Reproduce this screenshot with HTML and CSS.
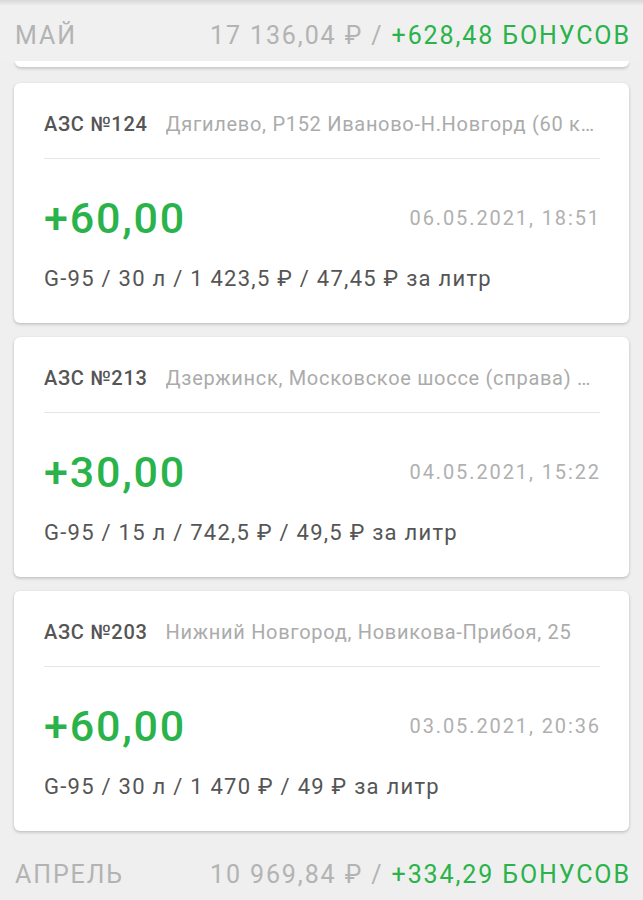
FILE: index.html
```html
<!DOCTYPE html>
<html lang="ru">
<head>
<meta charset="utf-8">
<link rel="stylesheet" href="styles.css">
</head>
<body>
<div class="screen">
  <div class="month">
    <span class="month-name">МАЙ</span>
    <span class="month-sum">17 136,04 ₽ / <span class="bonus">+628,48 БОНУСОВ</span></span>
  </div>
  <div class="card-tail"></div>
  <div class="list">
    <div class="card">
      <div class="card-head">
        <span class="station">АЗС №124</span>
        <span class="address">Дягилево, Р152 Иваново-Н.Новгорд (60 км)</span>
      </div>
      <div class="card-main">
        <span class="amount">+60,00</span>
        <span class="date">06.05.2021, 18:51</span>
      </div>
      <div class="fuel">G-95 / 30 л / 1 423,5 ₽ / 47,45 ₽ за литр</div>
    </div>
    <div class="card">
      <div class="card-head">
        <span class="station">АЗС №213</span>
        <span class="address">Дзержинск, Московское шоссе (справа) км 28</span>
      </div>
      <div class="card-main">
        <span class="amount">+30,00</span>
        <span class="date">04.05.2021, 15:22</span>
      </div>
      <div class="fuel">G-95 / 15 л / 742,5 ₽ / 49,5 ₽ за литр</div>
    </div>
    <div class="card">
      <div class="card-head">
        <span class="station">АЗС №203</span>
        <span class="address">Нижний Новгород, Новикова-Прибоя, 25</span>
      </div>
      <div class="card-main">
        <span class="amount">+60,00</span>
        <span class="date">03.05.2021, 20:36</span>
      </div>
      <div class="fuel">G-95 / 30 л / 1 470 ₽ / 49 ₽ за литр</div>
    </div>
  </div>
  <div class="month month-bottom">
    <span class="month-name">АПРЕЛЬ</span>
    <span class="month-sum">10 969,84 ₽ / <span class="bonus">+334,29 БОНУСОВ</span></span>
  </div>
</div>
</body>
</html>
```
FILE: styles.css
```css
html, body {
  margin: 0;
  padding: 0;
  background: #efefef;
}
body {
  font-family: Roboto, "Noto Sans", sans-serif;
  width: 643px;
  height: 900px;
  overflow: hidden;
}
.screen {
  position: relative;
}
.screen::before {
  content: "";
  position: absolute;
  left: 0;
  right: 0;
  top: 0;
  height: 6px;
  background: linear-gradient(rgba(0,0,0,0.10), rgba(0,0,0,0));
  z-index: 2;
}
.month {
  display: flex;
  justify-content: space-between;
  align-items: center;
  box-sizing: border-box;
  height: 61px;
  padding: 9px 14px 0 15px;
  font-size: 25px;
  letter-spacing: 1.9px;
  color: #b3b3b3;
  background: #f0f0f0;
}
.month-sum {
  margin-right: -1.9px;
}
.bonus {
  color: #2ab34a;
}
.card-tail {
  margin: 0 14px 0 15px;
  height: 6px;
  background: #fff;
  border-radius: 0 0 6px 6px;
  box-shadow: 0 2px 3px rgba(0,0,0,0.16);
}
.list {
  display: flex;
  flex-direction: column;
  gap: 14px;
  padding: 16px 14px 0 14px;
}
.card {
  background: #fff;
  border-radius: 6px;
  box-shadow: 0 1px 3px rgba(0,0,0,0.18), 0 2px 4px rgba(0,0,0,0.06);
  padding: 0 29px 30px 30px;
  height: 240px;
  box-sizing: border-box;
}
.card-head {
  display: flex;
  align-items: center;
  gap: 18px;
  padding-top: 28px;
  height: 26px;
  padding-bottom: 21px;
  border-bottom: 1px solid #e6e6e6;
  font-size: 20px;
  line-height: 26px;
  letter-spacing: 0.7px;
  white-space: nowrap;
  overflow: hidden;
}
.station {
  font-weight: 500;
  color: #555;
  flex: none;
}
.address {
  color: #ababab;
  overflow: hidden;
  text-overflow: ellipsis;
  min-width: 0;
}
.card-main {
  display: flex;
  justify-content: space-between;
  align-items: center;
  margin-top: 35px;
  height: 48px;
}
.amount {
  font-size: 43px;
  font-weight: 500;
  letter-spacing: 1.8px;
  color: #2ab34a;
  line-height: 48px;
}
.date {
  font-size: 20px;
  color: #b0b0b0;
  letter-spacing: 1.9px;
  margin-right: -1px;
}
.fuel {
  margin-top: 23px;
  font-size: 22px;
  letter-spacing: 1.25px;
  line-height: 28px;
  color: #555;
}
.month-bottom {
  margin-top: 15px;
  padding-top: 0;
  background: transparent;
  height: 56px;
}
```
